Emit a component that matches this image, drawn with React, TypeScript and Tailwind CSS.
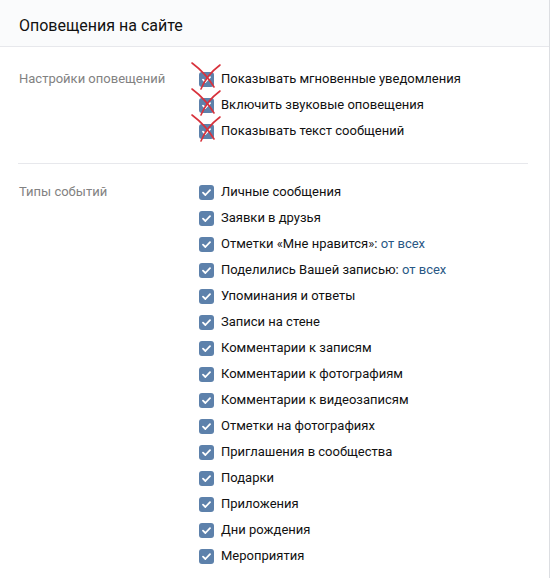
import React from "react";

const CheckBox = ({ crossed = false }: { crossed?: boolean }) => (
  <span className="relative flex h-[15px] w-[15px] shrink-0 items-center justify-center rounded-[3px] bg-[#5d81ab]">
    <svg width="9" height="7" viewBox="0 0 9 7" fill="none">
      <path
        d="M1 3.6 L3.4 6 L8 1.2"
        stroke="#fff"
        strokeWidth="1.8"
        strokeLinecap="round"
        strokeLinejoin="round"
      />
    </svg>
    {crossed && (
      <svg
        className="absolute left-[-8px] top-[-10px]"
        width="32"
        height="32"
        viewBox="0 0 32 32"
        fill="none"
      >
        <path d="M1 1 C9 7 17 15 23 25" stroke="#d8323c" strokeWidth="1.6" strokeLinecap="round" />
        <path d="M29 3 C21 9 14 17 10 27" stroke="#d8323c" strokeWidth="1.6" strokeLinecap="round" />
      </svg>
    )}
  </span>
);

const Row = ({
  label,
  extra,
  crossed = false,
}: {
  label: string;
  extra?: string;
  crossed?: boolean;
}) => (
  <div className="flex h-[26px] items-center gap-[7px]">
    <CheckBox crossed={crossed} />
    <span className="text-[13px] text-[#111]">
      {label}
      {extra && <span className="text-[#2a5885]"> {extra}</span>}
    </span>
  </div>
);

const EVENTS: { label: string; extra?: string }[] = [
  { label: "Личные сообщения" },
  { label: "Заявки в друзья" },
  { label: "Отметки «Мне нравится»:", extra: "от всех" },
  { label: "Поделились Вашей записью:", extra: "от всех" },
  { label: "Упоминания и ответы" },
  { label: "Записи на стене" },
  { label: "Комментарии к записям" },
  { label: "Комментарии к фотографиям" },
  { label: "Комментарии к видеозаписям" },
  { label: "Отметки на фотографиях" },
  { label: "Приглашения в сообщества" },
  { label: "Подарки" },
  { label: "Приложения" },
  { label: "Дни рождения" },
  { label: "Мероприятия" },
];

export default function App() {
  return (
    <div
      className="h-[578px] w-[553px] overflow-hidden bg-white"
      style={{ fontFamily: "Roboto, 'Open Sans', Arial, sans-serif" }}
    >
      <div className="h-full w-[550px] border-r border-[#dcdee2]">
        <div className="flex h-[47px] items-center border-b border-[#e7e8ec] bg-[#fafbfc] pl-[19px] pt-[5px]">
          <span className="text-[16px] text-[#111]">Оповещения на сайте</span>
        </div>
        <div className="mx-[18px] mr-[21px] flex border-b border-[#e7e8ec] pt-[19px] pb-[19px]">
          <div className="w-[181px] pt-[5px] pl-[1px] text-[13px] leading-[16px] text-[#828282]">
            Настройки оповещений
          </div>
          <div className="flex flex-col">
            <Row label="Показывать мгновенные уведомления" crossed />
            <Row label="Включить звуковые оповещения" crossed />
            <Row label="Показывать текст сообщений" crossed />
          </div>
        </div>
        <div className="mx-[18px] mr-[21px] flex pt-[15px]">
          <div className="w-[181px] pt-[5px] pl-[1px] text-[13px] leading-[16px] text-[#828282]">
            Типы событий
          </div>
          <div className="flex flex-col">
            {EVENTS.map((e) => (
              <Row key={e.label} label={e.label} extra={e.extra} />
            ))}
          </div>
        </div>
      </div>
    </div>
  );
}
